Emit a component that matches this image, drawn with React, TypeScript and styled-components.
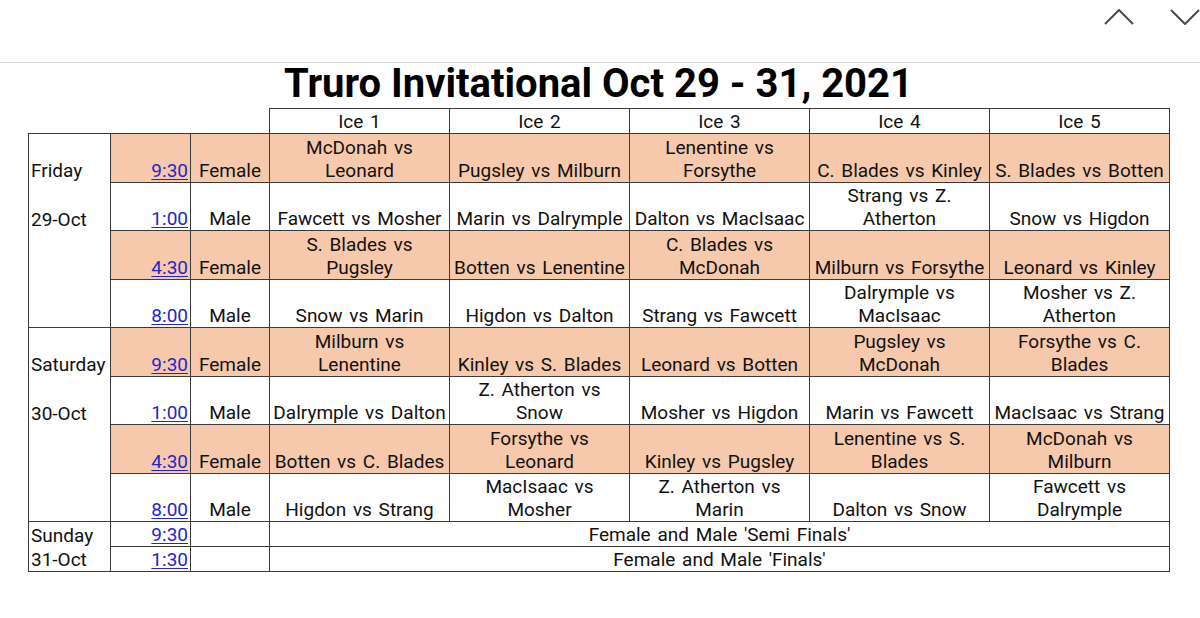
import styled, { createGlobalStyle } from "styled-components";

const GlobalStyle = createGlobalStyle`
  body {
    margin: 0;
    background: #ffffff;
    font-family: Roboto, "Liberation Sans", sans-serif;
    color: #111111;
  }
`;

const Page = styled.div`
  width: 1200px;
  height: 618px;
  overflow: hidden;
  background: #ffffff;
`;

const Toolbar = styled.div`
  height: 63px;
  border-bottom: 1px solid #d9d9d9;
  display: flex;
  justify-content: flex-end;
  align-items: flex-start;
  gap: 36px;
  padding-top: 9px;
  box-sizing: border-box;
`;

const NavButton = styled.button`
  width: 30px;
  height: 16px;
  padding: 0;
  border: none;
  background: none;
  display: block;
  cursor: pointer;
`;

const Sheet = styled.div`
  padding-left: 28px;
  width: 1141px;
`;

const Title = styled.h1`
  margin: 0;
  height: 45px;
  line-height: 42px;
  text-align: center;
  font-size: 40px;
  font-weight: 700;
  color: #000000;
`;

const Grid = styled.table`
  border-collapse: collapse;
  table-layout: fixed;
  width: 1141px;
  font-size: 19px;
  line-height: 23px;
  word-spacing: 2px;
`;

const Head = styled.th<{ $blank?: boolean }>`
  font-weight: 400;
  height: 24px;
  padding: 0;
  text-align: center;
  vertical-align: bottom;
  border: ${(p) => (p.$blank ? "none" : "1px solid #3a3a3a")};
`;

const Row = styled.tr<{ $tone: "orange" | "white" }>`
  background: ${(p) => (p.$tone === "orange" ? "#f7c9ac" : "#ffffff")};
`;

const Cell = styled.td<{ $align?: "left" | "right" | "center"; $short?: boolean }>`
  height: ${(p) => (p.$short ? "24px" : "47.5px")};
  padding: 0 2px;
  border: 1px solid #3a3a3a;
  text-align: ${(p) => p.$align ?? "center"};
  vertical-align: bottom;
  white-space: nowrap;
  overflow: hidden;
`;

const DayCell = styled.td<{ $first: boolean; $last: boolean; $short?: boolean }>`
  height: ${(p) => (p.$short ? "24px" : "47.5px")};
  padding: 0 2px;
  background: #ffffff;
  text-align: left;
  vertical-align: bottom;
  word-spacing: 0;
  border-left: 1px solid #3a3a3a;
  border-right: 1px solid #3a3a3a;
  border-top: ${(p) => (p.$first ? "1px solid #3a3a3a" : "none")};
  border-bottom: ${(p) => (p.$last ? "1px solid #3a3a3a" : "none")};
`;

const TimeLink = styled.a`
  color: #2626c8;
  text-decoration: underline;
  text-underline-offset: 2px;
`;

const Chevron = ({ up }: { up?: boolean }) => (
  <svg width="30" height="16" viewBox="0 0 30 16">
    <polyline
      points={up ? "1,15 15,1 29,15" : "1,1 15,15 29,1"}
      fill="none"
      stroke="#4a4a4a"
      strokeWidth="2"
    />
  </svg>
);

type Game = { time: string; gender: string; games: string[] };
type Day = { name: string; date: string; slots: Game[] };

const days: Day[] = [
  {
    name: "Friday",
    date: "29-Oct",
    slots: [
      { time: "9:30", gender: "Female", games: ["McDonah vs|Leonard", "Pugsley vs Milburn", "Lenentine vs|Forsythe", "C. Blades vs Kinley", "S. Blades vs Botten"] },
      { time: "1:00", gender: "Male", games: ["Fawcett vs Mosher", "Marin vs Dalrymple", "Dalton vs MacIsaac", "Strang vs Z.|Atherton", "Snow vs Higdon"] },
      { time: "4:30", gender: "Female", games: ["S. Blades vs|Pugsley", "Botten vs Lenentine", "C. Blades vs|McDonah", "Milburn vs Forsythe", "Leonard vs Kinley"] },
      { time: "8:00", gender: "Male", games: ["Snow vs Marin", "Higdon vs Dalton", "Strang vs Fawcett", "Dalrymple vs|MacIsaac", "Mosher vs Z.|Atherton"] },
    ],
  },
  {
    name: "Saturday",
    date: "30-Oct",
    slots: [
      { time: "9:30", gender: "Female", games: ["Milburn vs|Lenentine", "Kinley vs S. Blades", "Leonard vs Botten", "Pugsley vs|McDonah", "Forsythe vs C.|Blades"] },
      { time: "1:00", gender: "Male", games: ["Dalrymple vs Dalton", "Z. Atherton vs|Snow", "Mosher vs Higdon", "Marin vs Fawcett", "MacIsaac vs Strang"] },
      { time: "4:30", gender: "Female", games: ["Botten vs C. Blades", "Forsythe vs|Leonard", "Kinley vs Pugsley", "Lenentine vs S.|Blades", "McDonah vs|Milburn"] },
      { time: "8:00", gender: "Male", games: ["Higdon vs Strang", "MacIsaac vs|Mosher", "Z. Atherton vs|Marin", "Dalton vs Snow", "Fawcett vs|Dalrymple"] },
    ],
  },
];

const finals = [
  { label: "Sunday", time: "9:30", text: "Female and Male 'Semi Finals'" },
  { label: "31-Oct", time: "1:30", text: "Female and Male 'Finals'" },
];

const GameText = ({ text }: { text: string }) => (
  <>
    {text.split("|").map((line, i) => (
      <div key={i}>{line}</div>
    ))}
  </>
);

export default function App() {
  return (
    <Page>
      <GlobalStyle />
      <Toolbar>
        <NavButton aria-label="previous">
          <Chevron up />
        </NavButton>
        <NavButton aria-label="next">
          <Chevron />
        </NavButton>
      </Toolbar>

      <Sheet>
        <Title>Truro Invitational Oct 29 - 31, 2021</Title>
        <Grid>
          <colgroup>
            <col style={{ width: 82 }} />
            <col style={{ width: 80 }} />
            <col style={{ width: 79 }} />
            <col style={{ width: 180 }} />
            <col style={{ width: 180 }} />
            <col style={{ width: 180 }} />
            <col style={{ width: 180 }} />
            <col style={{ width: 180 }} />
          </colgroup>
          <thead>
            <tr>
              <Head $blank />
              <Head $blank />
              <Head $blank />
              <Head>Ice 1</Head>
              <Head>Ice 2</Head>
              <Head>Ice 3</Head>
              <Head>Ice 4</Head>
              <Head>Ice 5</Head>
            </tr>
          </thead>
          <tbody>
            {days.map((day) =>
              day.slots.map((slot, i) => (
                <Row key={day.name + i} $tone={i % 2 === 0 ? "orange" : "white"}>
                  <DayCell $first={i === 0} $last={i === day.slots.length - 1}>
                    {i === 0 ? day.name : i === 1 ? day.date : ""}
                  </DayCell>
                  <Cell $align="right">
                    <TimeLink href="#">{slot.time}</TimeLink>
                  </Cell>
                  <Cell>{slot.gender}</Cell>
                  {slot.games.map((g, j) => (
                    <Cell key={j}>
                      <GameText text={g} />
                    </Cell>
                  ))}
                </Row>
              ))
            )}
            {finals.map((f, i) => (
              <Row key={f.time} $tone="white">
                <DayCell $first={i === 0} $last={i === finals.length - 1} $short>
                  {f.label}
                </DayCell>
                <Cell $align="right" $short>
                  <TimeLink href="#">{f.time}</TimeLink>
                </Cell>
                <Cell $short />
                <Cell colSpan={5} $short>
                  {f.text}
                </Cell>
              </Row>
            ))}
          </tbody>
        </Grid>
      </Sheet>
    </Page>
  );
}
